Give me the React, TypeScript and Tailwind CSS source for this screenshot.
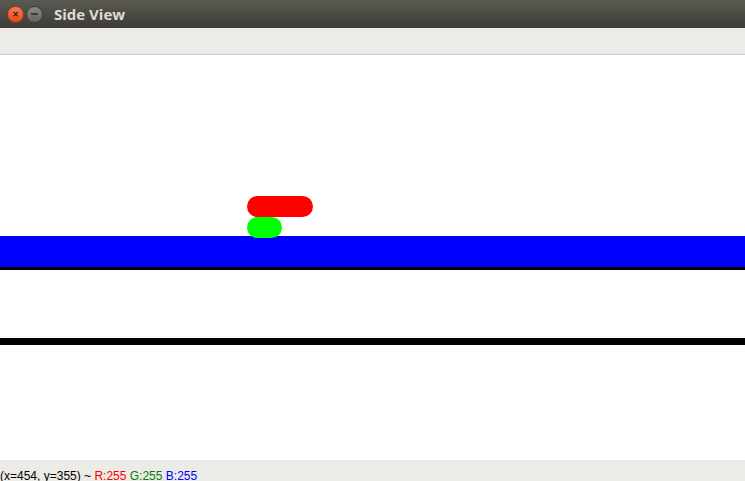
import React from 'react';

const TitleBar: React.FC = () => {
    return (
        <div className="flex items-center h-[28px] bg-gradient-to-b from-[#5b5a52] to-[#3c3b37] px-[7px]">
            <div className="flex items-center justify-center w-[17px] h-[17px] rounded-full bg-gradient-to-b from-[#f47e55] to-[#df4a16] border border-[#9e3a14]">
                <span className="text-[9px] leading-none text-[#3b1a0c] font-bold" style={{fontFamily: '"DejaVu Sans", sans-serif'}}>×</span>
            </div>
            <div className="flex items-center justify-center w-[17px] h-[17px] ml-[2px] rounded-full bg-gradient-to-b from-[#8a8984] to-[#65645f] border border-[#3d3c38]">
                <div className="w-[7px] h-[2px] bg-[#3a3935]" />
            </div>
            <div className="ml-[11px] text-[15px] font-bold text-[#dfdbd2] font-['Open_Sans',sans-serif] leading-none">
                Side View
            </div>
        </div>
    );
};

const Canvas: React.FC = () => {
    return (
        <div className="relative flex flex-col flex-1 bg-white">
            <div className="h-[181px]" />
            <div className="h-[31px] bg-[#0000ff]" />
            <div className="h-[3px] bg-black" />
            <div className="h-[68px]" />
            <div className="h-[7px] bg-black" />
            <div className="flex-1" />
            {/* drawn shapes */}
            <div className="absolute left-[247px] top-[141px] w-[66px] h-[21px] rounded-full bg-[#ff0000]" />
            <div className="absolute left-[247px] top-[162px] w-[35px] h-[21px] rounded-full bg-[#00ff00]" />
        </div>
    );
};

const StatusBar: React.FC = () => {
    return (
        <div className="h-[21px] bg-[#edebe7] overflow-hidden">
            <div className="mt-[10px] text-[12px] leading-none whitespace-nowrap text-black font-['Liberation_Sans',sans-serif]">
                (x=454, y=355) ~ <span className="text-[#ff0000]">R:255</span>{' '}
                <span className="text-[#008000]">G:255</span>{' '}
                <span className="text-[#0000ff]">B:255</span>
            </div>
        </div>
    );
};

export default function App() {
    return (
        <div className="flex flex-col w-[745px] h-[481px] overflow-hidden bg-white">
            <TitleBar />
            <div className="h-[27px] bg-[#edebe7] border-b border-[#cdcbc7]" />
            <Canvas />
            <StatusBar />
        </div>
    );
}
